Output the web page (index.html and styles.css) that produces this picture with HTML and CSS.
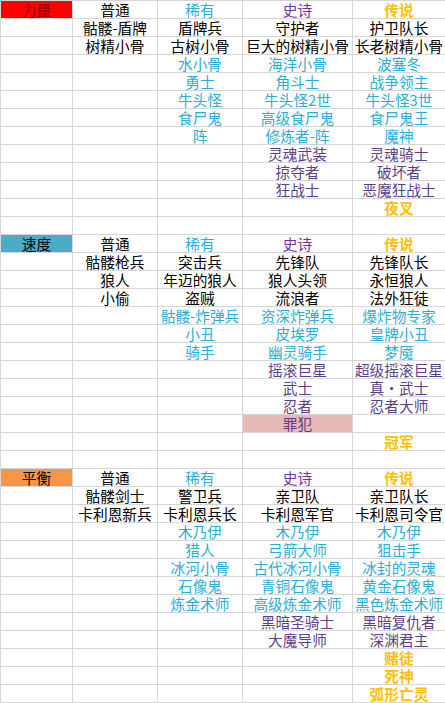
FILE: index.html
```html
<!DOCTYPE html>
<html lang="zh-CN">
<head>
<meta charset="utf-8">
<title>单位表</title>
<link rel="stylesheet" href="styles.css">
</head>
<body>
<table class="sheet">
<colgroup><col class="c1"><col class="c2"><col class="c3"><col class="c4"><col class="c5"></colgroup>
<tbody>
<tr><td class="cat red">力量</td><td>普通</td><td class="r">稀有</td><td class="e">史诗</td><td class="l">传说</td></tr>
<tr><td></td><td>骷髅-盾牌</td><td>盾牌兵</td><td>守护者</td><td>护卫队长</td></tr>
<tr><td></td><td>树精小骨</td><td>古树小骨</td><td>巨大的树精小骨</td><td>长老树精小骨</td></tr>
<tr><td></td><td></td><td class="r">水小骨</td><td class="r">海洋小骨</td><td class="r">波塞冬</td></tr>
<tr><td></td><td></td><td class="r">勇士</td><td class="r">角斗士</td><td class="r">战争领主</td></tr>
<tr><td></td><td></td><td class="r">牛头怪</td><td class="r">牛头怪2世</td><td class="r">牛头怪3世</td></tr>
<tr><td></td><td></td><td class="r">食尸鬼</td><td class="r">高级食尸鬼</td><td class="r">食尸鬼王</td></tr>
<tr><td></td><td></td><td class="r">阵</td><td class="r">修炼者-阵</td><td class="r">魔神</td></tr>
<tr><td></td><td></td><td></td><td class="p">灵魂武装</td><td class="p">灵魂骑士</td></tr>
<tr><td></td><td></td><td></td><td class="p">掠夺者</td><td class="p">破坏者</td></tr>
<tr><td></td><td></td><td></td><td class="p">狂战士</td><td class="p">恶魔狂战士</td></tr>
<tr><td></td><td></td><td></td><td></td><td class="l">夜叉</td></tr>
<tr><td></td><td></td><td></td><td></td><td></td></tr>
<tr><td class="cat blue">速度</td><td>普通</td><td class="r">稀有</td><td class="e">史诗</td><td class="l">传说</td></tr>
<tr><td></td><td>骷髅枪兵</td><td>突击兵</td><td>先锋队</td><td>先锋队长</td></tr>
<tr><td></td><td>狼人</td><td>年迈的狼人</td><td>狼人头领</td><td>永恒狼人</td></tr>
<tr><td></td><td>小偷</td><td>盗贼</td><td>流浪者</td><td>法外狂徒</td></tr>
<tr><td></td><td></td><td class="r">骷髅-炸弹兵</td><td class="r">资深炸弹兵</td><td class="r">爆炸物专家</td></tr>
<tr><td></td><td></td><td class="r">小丑</td><td class="r">皮埃罗</td><td class="r">皇牌小丑</td></tr>
<tr><td></td><td></td><td class="r">骑手</td><td class="r">幽灵骑手</td><td class="r">梦魇</td></tr>
<tr><td></td><td></td><td></td><td class="p">摇滚巨星</td><td class="p">超级摇滚巨星</td></tr>
<tr><td></td><td></td><td></td><td class="p">武士</td><td class="p">真・武士</td></tr>
<tr><td></td><td></td><td></td><td class="p">忍者</td><td class="p">忍者大师</td></tr>
<tr><td></td><td></td><td></td><td class="p pink">罪犯</td><td></td></tr>
<tr><td></td><td></td><td></td><td></td><td class="l">冠军</td></tr>
<tr><td></td><td></td><td></td><td></td><td></td></tr>
<tr><td class="cat orange">平衡</td><td>普通</td><td class="r">稀有</td><td class="e">史诗</td><td class="l">传说</td></tr>
<tr><td></td><td>骷髅剑士</td><td>警卫兵</td><td>亲卫队</td><td>亲卫队长</td></tr>
<tr><td></td><td>卡利恩新兵</td><td>卡利恩兵长</td><td>卡利恩军官</td><td>卡利恩司令官</td></tr>
<tr><td></td><td></td><td class="r">木乃伊</td><td class="r">木乃伊</td><td class="r">木乃伊</td></tr>
<tr><td></td><td></td><td class="r">猎人</td><td class="r">弓箭大师</td><td class="r">狙击手</td></tr>
<tr><td></td><td></td><td class="r">冰河小骨</td><td class="r">古代冰河小骨</td><td class="r">冰封的灵魂</td></tr>
<tr><td></td><td></td><td class="r">石像鬼</td><td class="r">青铜石像鬼</td><td class="r">黄金石像鬼</td></tr>
<tr><td></td><td></td><td class="r">炼金术师</td><td class="r">高级炼金术师</td><td class="r">黑色炼金术师</td></tr>
<tr><td></td><td></td><td></td><td class="p">黑暗圣骑士</td><td class="p">黑暗复仇者</td></tr>
<tr><td></td><td></td><td></td><td class="p">大魔导师</td><td class="p">深渊君主</td></tr>
<tr><td></td><td></td><td></td><td></td><td class="l">赌徒</td></tr>
<tr><td></td><td></td><td></td><td></td><td class="l">死神</td></tr>
<tr><td></td><td></td><td></td><td></td><td class="l">弧形亡灵</td></tr>
</tbody>
</table>
</body>
</html>
```

FILE: styles.css
```css
html, body {
  margin: 0;
  padding: 0;
  background: #ffffff;
  overflow: hidden;
}

.sheet {
  table-layout: fixed;
  border-collapse: separate;
  border-spacing: 1px;
  background: #d6d6d6;
  width: 446px;
  font-family: "Noto Sans CJK SC", "Noto Sans", sans-serif;
  font-size: 14.7px;
  color: #000000;
}

.c1 { width: 71px; }
.c2 { width: 84px; }
.c3 { width: 84px; }
.c4 { width: 109px; }
.c5 { width: 92px; }

.sheet td {
  background: #ffffff;
  height: 17px;
  padding: 0;
  line-height: 17px;
  text-align: center;
  vertical-align: bottom;
  white-space: nowrap;
  overflow: visible;
}

.sheet td.cat { color: #000000; }
.sheet td.red { background: #ff0000; color: #8a0a0a; }
.sheet td.blue { background: #4bacc6; }
.sheet td.orange { background: #f79646; }

.r { color: #2aaed3; }
.e { color: #7030a0; }
.p { color: #5e3f86; }
.l { color: #ffc000; font-weight: bold; }

.sheet td.pink { background: #e6b8b7; }
```
